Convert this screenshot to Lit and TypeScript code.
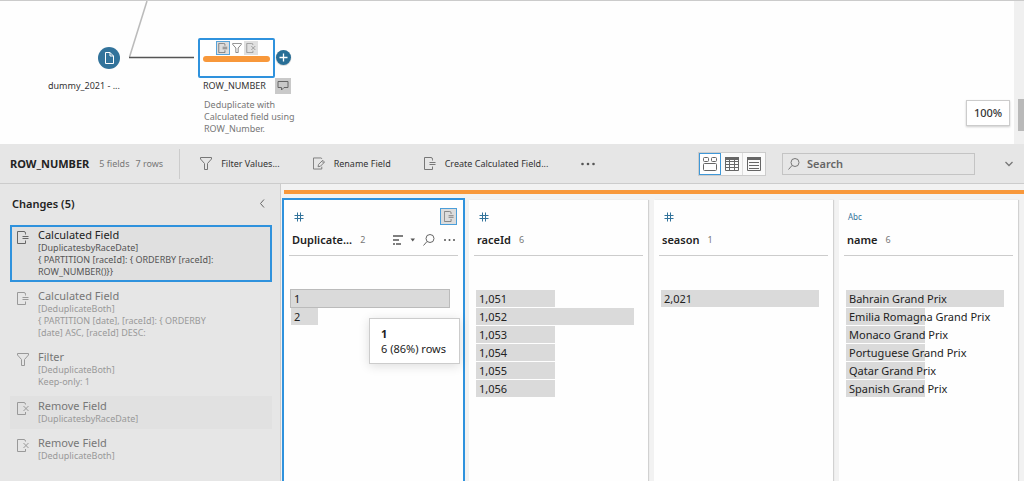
import { LitElement, html, css, svg, nothing } from "lit";
import { customElement, property } from "lit/decorators.js";
import { classMap } from "lit/directives/class-map.js";
import { styleMap } from "lit/directives/style-map.js";

const glyphs = {
  calc: svg`<path d="M8.500 3.500V2.200Q8.500 .5 7 .5H.5V12.500H8.500V9.500M5.500 5.500H11.500M5.500 7.500H11.500"/>`,
  remove: svg`<path d="M8.500 2.500Q8.500 .5 7 .5H.5V12.500H8.500V10M6.500 4L11.500 9M11.500 4L6.500 9"/>`,
  filter: svg`<path d="M.5 .5H11.500V2L7.500 6.500V12.500H4.500V6.500L.5 2Z"/>`,
  rename: svg`<path d="M9.500 1.500Q9.500 .5 8.500 .5H.5V12.500H9.500V10M10.500 3L12.500 5L8 9.500L5.500 10L6 7.500ZM9.500 4L11.500 6"/>`,
};
type Glyph = keyof typeof glyphs;

@customElement("prep-icon")
class PrepIcon extends LitElement {
  @property() name: Glyph = "calc";
  static styles = css`
    :host { display: inline-flex; flex: none; }
    svg { width: 100%; height: 100%; fill: none; stroke: currentColor; stroke-width: 1; }
  `;
  render() {
    return html`<svg viewBox=${this.name === "rename" ? "0 0 13 13" : "0 0 12 13"} aria-hidden="true">${glyphs[this.name]}</svg>`;
  }
}

interface Change { icon: Glyph; title: string; lines: string[]; state: "selected" | "later" | "plain" | "hover" }
const changes: Change[] = [
  { icon: "calc", title: "Calculated Field", lines: ["[DuplicatesbyRaceDate]", "{ PARTITION [raceId]: { ORDERBY [raceId]:", "ROW_NUMBER()}}"], state: "selected" },
  { icon: "calc", title: "Calculated Field", lines: ["[DeduplicateBoth]", "{ PARTITION [date], [raceId]: { ORDERBY", "[date] ASC, [raceId] DESC:"], state: "later" },
  { icon: "filter", title: "Filter", lines: ["[DeduplicateBoth]", "Keep-only: 1"], state: "plain" },
  { icon: "remove", title: "Remove Field", lines: ["[DuplicatesbyRaceDate]"], state: "hover" },
  { icon: "remove", title: "Remove Field", lines: ["[DeduplicateBoth]"], state: "plain" },
];

interface Field { name: string; count: number; type: "number" | "text"; selected?: boolean; values: [string, number][] }
const fields: Field[] = [
  { name: "Duplicate...", count: 2, type: "number", selected: true, values: [["1", 6], ["2", 1]] },
  { name: "raceId", count: 6, type: "number", values: [["1,051", 1], ["1,052", 2], ["1,053", 1], ["1,054", 1], ["1,055", 1], ["1,056", 1]] },
  { name: "season", count: 1, type: "number", values: [["2,021", 7]] },
  { name: "name", count: 6, type: "text", values: [["Bahrain Grand Prix", 2], ["Emilia Romagna Grand Prix", 1], ["Monaco Grand Prix", 1], ["Portuguese Grand Prix", 1], ["Qatar Grand Prix", 1], ["Spanish Grand Prix", 1]] },
];

@customElement("flow-pane")
class FlowPane extends LitElement {
  static styles = css`
    :host { display: flex; position: relative; height: 143px; border-top: 1px solid #cbcbcb; background: #fefefe; overflow: hidden; font-size: 9px; line-height: 12px; color: #333; }
    .canvas { position: relative; flex: 1; }
    .wires { position: absolute; left: 0; top: 0; width: 300px; height: 143px; }
    .source { position: absolute; left: 98px; top: 46px; }
    .source-name { position: absolute; left: 48px; top: 79px; white-space: nowrap; }
    .step { position: absolute; box-sizing: border-box; left: 198px; top: 37px; width: 77px; height: 40px; padding: 1px 3px; border: 2px solid #2f92dd; border-radius: 2px; background: #fff; display: flex; flex-direction: column; align-items: center; gap: 1px; }
    .badges { display: flex; color: #666; }
    .badge { box-sizing: border-box; width: 14px; height: 14px; padding: 2px; display: grid; place-items: center; }
    .badge prep-icon { width: 10px; height: 10px; }
    .calc { background: #ddd; border: 1px solid #58a4da; padding: 1px; }
    .remove { background: #e0e0e0; color: #888; }
    .bar { width: 67px; height: 6px; border-radius: 3px; background: #f8983b; }
    .add { position: absolute; left: 275px; top: 48px; }
    button { padding: 0; border: 0; background: none; font: inherit; }
    .add svg, .source svg, .note svg { display: block; }
    .step-name { position: absolute; left: 203px; top: 79px; }
    .note { position: absolute; left: 275px; top: 77px; width: 16px; height: 16px; background: #c9c9c9; display: grid; place-items: center; }
    .description { position: absolute; left: 204px; top: 98px; width: 96px; margin: 0; color: #777; }
    .zoom { position: absolute; right: 4px; bottom: 18px; box-sizing: border-box; width: 44px; height: 26px; border: 1px solid #ccc; background: #fff; box-shadow: 0 1px 2px #0003; font-size: 11px; font-weight: 500; color: #333; text-align: center; }
    .scroll { box-sizing: border-box; width: 10px; background: #f0f0f0; padding: 98px 0 0 4px; }
    .thumb { height: 32px; background: #b9b9b9; }
  `;
  render() {
    return html`
      <div class="canvas">
        <svg class="wires" viewBox="0 0 300 143" fill="none" aria-hidden="true">
          <path d="M147 0L129.500 56" stroke="#bbb" stroke-width="1.500"/>
          <path d="M129 56.500H194" stroke="#555" stroke-width="1.500"/>
        </svg>
        <button class="source" aria-label="dummy_2021 input">
          <svg width="22" height="22" viewBox="0 0 22 22" fill="none"><circle cx="11" cy="11" r="11" fill="#32739b"/><path d="M7.500 5.500H12L15.500 9V16.500H7.500ZM12 5.500V9H15.500" stroke="#fff"/></svg>
        </button>
        <span class="source-name">dummy_2021 - ...</span>
        <div class="step">
          <div class="badges">
            <span class="badge calc"><prep-icon name="calc"></prep-icon></span>
            <span class="badge"><prep-icon name="filter"></prep-icon></span>
            <span class="badge remove"><prep-icon name="remove"></prep-icon></span>
          </div>
          <div class="bar"></div>
        </div>
        <button class="add" aria-label="Add step">
          <svg width="17" height="17" viewBox="0 0 17 17"><circle cx="8.500" cy="9" r="8" fill="#0002"/><circle cx="8.500" cy="8.500" r="7.500" fill="#286e96"/><path d="M8.500 4.500V12.500M4.500 8.500H12.500" stroke="#fff" stroke-width="1.300"/></svg>
        </button>
        <span class="step-name">ROW_NUMBER</span>
        <button class="note" aria-label="Description">
          <svg width="12" height="12" viewBox="0 0 12 12" fill="none"><path d="M1 1.500H11V7.500H7L4.500 10V7.500H1Z" stroke="#666"/></svg>
        </button>
        <p class="description">Deduplicate with Calculated field using ROW_Number.</p>
        <button class="zoom">100%</button>
      </div>
      <div class="scroll"><div class="thumb"></div></div>
    `;
  }
}

@customElement("step-toolbar")
class StepToolbar extends LitElement {
  static styles = css`
    :host { display: flex; align-items: center; box-sizing: border-box; height: 40px; padding: 0 10px; border-bottom: 1px solid #ccc; background: #e6e6e6; font-size: 9px; line-height: 12px; color: #333; white-space: nowrap; }
    h1 { margin: 0 10px 0 0; font-size: 11px; line-height: 16px; font-weight: 700; color: #222; }
    .counts { display: flex; gap: 6px; color: #777; }
    .rule { width: 1px; height: 30px; margin: 0 20px 0 16px; background: #ccc; }
    .actions { display: flex; align-items: center; gap: 33px; }
    button { display: flex; align-items: center; gap: 9px; padding: 0; border: 0; background: none; font: inherit; color: inherit; }
    button prep-icon { width: 12px; height: 13px; color: #777; }
    .views { display: flex; margin-left: auto; border: 1px solid #ccc; background: #fafafa; }
    .views button { box-sizing: border-box; width: 22px; height: 22px; justify-content: center; border-right: 1px solid #ddd; }
    .views button.on { border: 1px solid #3f98d8; background: #fff; }
    .views button:last-child { border-right: 0; }
    .search { box-sizing: border-box; display: flex; align-items: center; gap: 7px; width: 193px; height: 22px; margin: 0 29px 0 16px; padding: 0 5px; border: 1px solid #c4c4c4; }
    input { flex: 1; min-width: 0; padding: 0; border: 0; outline: 0; background: none; font: inherit; font-size: 11px; font-weight: 600; color: #333; }
    input::placeholder { color: #666; opacity: 1; }
  `;
  render() {
    return html`
      <h1>ROW_NUMBER</h1>
      <div class="counts"><span>5 fields</span><span>7 rows</span></div>
      <div class="rule"></div>
      <div class="actions">
        <button><prep-icon name="filter"></prep-icon>Filter Values...</button>
        <button><prep-icon name="rename"></prep-icon>Rename Field</button>
        <button><prep-icon name="calc"></prep-icon>Create Calculated Field...</button>
        <button aria-label="More"><svg width="14" height="4" viewBox="0 0 14 4" fill="#555"><circle cx="1.500" cy="2" r="1.300"/><circle cx="7" cy="2" r="1.300"/><circle cx="12.500" cy="2" r="1.300"/></svg></button>
      </div>
      <div class="views">
        <button class="on" aria-label="Profile"><svg width="14" height="14" viewBox="0 0 14 14" fill="none" stroke="#666"><rect x=".5" y=".5" width="5" height="4" rx="1"/><rect x="8.500" y=".5" width="5" height="4" rx="1"/><rect x=".5" y="6.500" width="13" height="7" rx="1"/></svg></button>
        <button aria-label="Data grid"><svg width="14" height="14" viewBox="0 0 14 14" fill="none" stroke="#666"><path d="M.5 .5H13.500V13.500H.5ZM4.500 1V13M9.500 1V13M1 7.500H13M1 10.500H13M1 4.500H13"/><path d="M0 1.500H14" stroke-width="3"/></svg></button>
        <button aria-label="List"><svg width="14" height="14" viewBox="0 0 14 14" fill="none" stroke="#666"><path d="M.5 .5H13.500V13.500H.5ZM2 5.500H12M2 8.500H12M2 11.500H12"/><path d="M0 1.500H14" stroke-width="3"/></svg></button>
      </div>
      <label class="search">
        <svg width="12" height="12" viewBox="0 0 12 12" fill="none" stroke="#777"><circle cx="7" cy="4.500" r="4"/><path d="M4 7.500L.5 11.500"/></svg>
        <input type="search" aria-label="Search" placeholder="Search">
      </label>
      <button aria-label="Collapse"><svg width="10" height="6" viewBox="0 0 10 6" fill="none" stroke="#777" stroke-width="1.300"><path d="M1.500 1L5 4.500L8.500 1"/></svg></button>
    `;
  }
}

@customElement("changes-pane")
class ChangesPane extends LitElement {
  static styles = css`
    :host { display: block; box-sizing: border-box; width: 281px; flex: none; padding: 11px 8px 0 10px; border-right: 1px solid #ccc; background: #e6e6e6; color: #555; }
    header { display: flex; justify-content: space-between; align-items: center; margin: 0 7px 13px 2px; }
    h2 { margin: 0; font-size: 11px; line-height: 17px; font-weight: 600; color: #222; }
    header button { padding: 0; border: 0; background: none; display: flex; }
    ol { display: flex; flex-direction: column; gap: 4px; margin: 0; padding: 0; list-style: none; }
    li { box-sizing: border-box; display: flex; align-items: flex-start; gap: 9px; padding: 1px 5px 2px; border: 2px solid transparent; font-size: 9px; line-height: 12px; color: #999; }
    li prep-icon { width: 12px; height: 13px; margin-top: 3px; color: #999; }
    .title { font-size: 11px; line-height: 14px; color: #777; }
    .selected { border-color: #2f92dd; background: #e0e0e0; color: #555; }
    .selected .title { color: #222; }
    .selected prep-icon { color: #666; }
    .hover { background: #e1e1e1; }
  `;
  render() {
    return html`
      <header>
        <h2>Changes (5)</h2>
        <button aria-label="Hide changes"><svg width="6" height="9" viewBox="0 0 6 9" fill="none" stroke="#666"><path d="M5 .5L1.500 4.500L5 8.500"/></svg></button>
      </header>
      <ol>
        ${changes.map((c) => html`
          <li class=${c.state}>
            <prep-icon name=${c.icon}></prep-icon>
            <div><div class="title">${c.title}</div>${c.lines.map((l) => html`<div>${l}</div>`)}</div>
          </li>`)}
      </ol>
    `;
  }
}

@customElement("field-card")
class FieldCard extends LitElement {
  @property({ attribute: false }) field!: Field;
  static styles = css`
    :host { display: block; position: relative; flex: 1; min-width: 0; background: #fefefe; box-shadow: 1px 0 1px #0002; color: #333; }
    :host([selected]) { outline: 2px solid #2f92dd; box-shadow: none; z-index: 1; }
    header { box-sizing: border-box; display: flex; flex-direction: column; margin: 0 5px; height: 56px; padding: 8px 1px 0 3px; border-bottom: 1px solid #ccc; }
    .kind { display: flex; justify-content: space-between; align-items: center; height: 17px; padding-left: 1px; font-size: 8px; color: #32739b; }
    .kind > svg { margin-left: 1px; }
    .mark { box-sizing: border-box; width: 17px; height: 17px; display: grid; place-items: center; border: 1px solid #4b9ed9; background: #dcdcdc; color: #777; }
    .mark prep-icon { width: 10px; height: 11px; }
    .head { display: flex; align-items: center; margin-top: 7px; line-height: 16px; }
    h3 { margin: 0 8px 0 0; font-size: 11px; font-weight: 600; color: #222; }
    .count { font-size: 9px; color: #777; }
    .tools { display: flex; align-items: center; gap: 8px; margin-left: auto; }
    .tools button { display: flex; padding: 0; border: 0; background: none; }
    ul { margin: 34px 14px 0 7px; padding: 0; list-style: none; }
    li { position: relative; height: 17px; margin-bottom: 1px; line-height: 17px; font-size: 11px; white-space: nowrap; }
    .bar { height: 17px; background: #dadada; }
    .value { position: absolute; left: 3px; top: 0; color: #222; }
    .picked .bar { outline: 1px solid #bbb; }
    .tip { position: absolute; z-index: 2; box-sizing: border-box; left: 85px; top: 118px; min-width: 91px; padding: 7px 11px 6px; border: 1px solid #ccc; background: #fff; box-shadow: 0 2px 10px #0002; font-size: 11px; line-height: 16px; color: #222; white-space: nowrap; }
    .tip b { display: block; line-height: 15px; }
  `;
  render() {
    const f = this.field;
    const max = Math.max(...f.values.map(([, n]) => n));
    return html`
      <header>
        <div class="kind">
          ${f.type === "number"
            ? html`<svg width="10" height="10" viewBox="0 0 10 10" stroke="#32739b" role="img" aria-label="Number"><path d="M3.500 .5V9.500M6.500 .5V9.500M.5 3.500H9.500M.5 6.500H9.500"/></svg>`
            : html`<span>Abc</span>`}
          ${f.selected ? html`<span class="mark"><prep-icon name="calc"></prep-icon></span>` : nothing}
        </div>
        <div class="head">
          <h3>${f.name}</h3><span class="count">${f.count}</span>
          ${f.selected ? html`
            <div class="tools">
              <button aria-label="Sort"><svg width="22" height="10" viewBox="0 0 22 10" fill="none" stroke="#555"><path d="M0 1H10M0 5H6M0 9H2M3 9H8" stroke-width="1.500"/><path d="M17.500 3.500H22L19.750 6.500Z" fill="#555" stroke="none"/></svg></button>
              <button aria-label="Find"><svg width="12" height="12" viewBox="0 0 12 12" fill="none" stroke="#666"><circle cx="7" cy="4.500" r="4"/><path d="M4 7.500L.5 11.500"/></svg></button>
              <button aria-label="More"><svg width="14" height="4" viewBox="0 0 14 4" fill="#555"><circle cx="2" cy="2" r="1"/><circle cx="6.500" cy="2" r="1"/><circle cx="11" cy="2" r="1"/></svg></button>
            </div>` : nothing}
        </div>
      </header>
      <ul>
        ${f.values.map(([label, n], i) => html`
          <li class=${classMap({ picked: !!f.selected && i === 0 })}>
            <div class="bar" style=${styleMap({ width: `${Math.round((n / max) * 100)}%` })}></div>
            <span class="value">${label}</span>
          </li>`)}
      </ul>
      ${f.selected ? html`<div class="tip" role="tooltip"><b>1</b>6 (86%) rows</div>` : nothing}
    `;
  }
}

@customElement("app-root")
class AppRoot extends LitElement {
  static styles = css`
    :host { display: flex; flex-direction: column; min-height: 100vh; background: #f2f2f2; font-family: "Noto Sans", "Open Sans", sans-serif; }
    main { display: flex; flex: 1; }
    .profile { display: flex; flex-direction: column; flex: 1; min-width: 0; padding: 6px 0 0 3px; }
    .stripe { height: 4px; background: #f8983b; }
    .cards { display: flex; flex: 1; gap: 6px; margin-left: -3px; padding: 6px 6px 0 3px; overflow: hidden; }
  `;
  render() {
    return html`
      <flow-pane></flow-pane>
      <step-toolbar></step-toolbar>
      <main>
        <changes-pane></changes-pane>
        <section class="profile">
          <div class="stripe"></div>
          <div class="cards">${fields.map((f) => html`<field-card .field=${f} ?selected=${!!f.selected}></field-card>`)}</div>
        </section>
      </main>
    `;
  }
}
